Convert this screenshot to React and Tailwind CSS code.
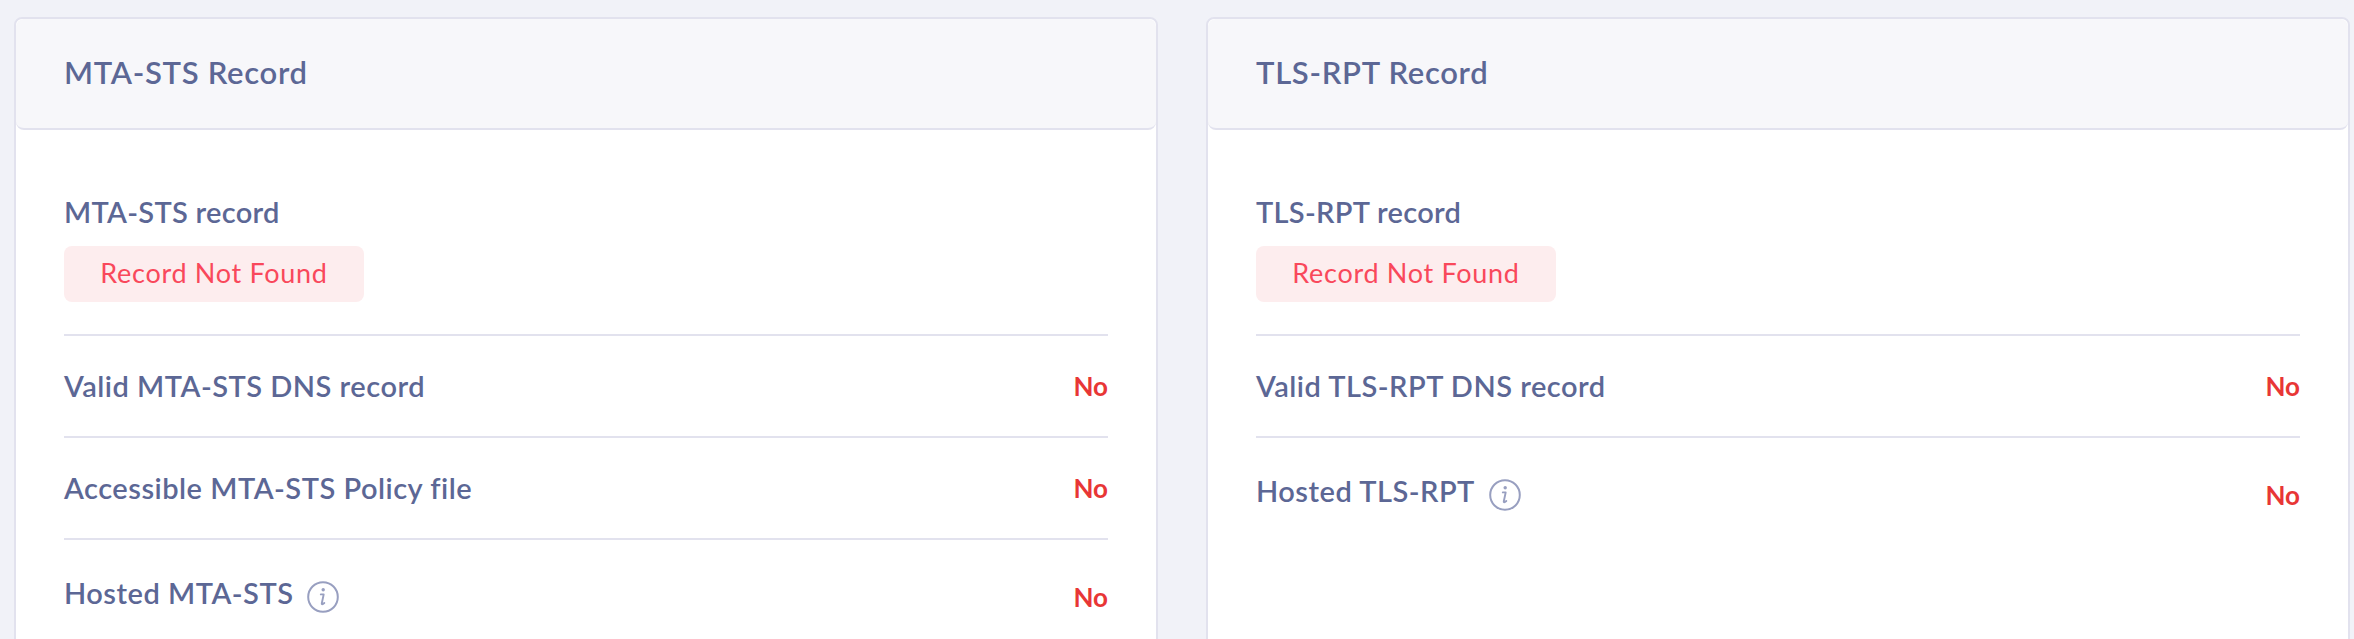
const stack = "font-['Lato','Open_Sans',sans-serif]";

function InfoIcon() {
  return (
    <svg width="32" height="32" viewBox="0 0 32 32" className="ml-4 shrink-0 -translate-x-[2px]" fill="none">
      <circle cx="16" cy="16" r="14.8" stroke="#989fc0" strokeWidth="2" />
      <circle cx="16.2" cy="8.8" r="1.7" fill="#989fc0" />
      <path d="M13.8 13.4h2.9l-1.9 8.9c-.2 1.1.7 1.4 2.5-.3" stroke="#989fc0" strokeWidth="1.9" strokeLinecap="round" strokeLinejoin="round" />
    </svg>
  );
}

function Row({ label, info }) {
  return (
    <div className={`flex items-center justify-between border-t-2 border-[#e2e2ee] ${info ? 'h-[116px]' : 'h-[102px]'}`}>
      <div className="flex items-center text-[29px] font-semibold tracking-[0.5px] text-[#5c6795]">
        <span className={info ? 'mb-2' : ''}>{label}</span>
        {info && <InfoIcon />}
      </div>
      <span className="text-[26px] font-bold text-[#e83636]">No</span>
    </div>
  );
}

function Card({ title, recordLabel, rows }) {
  return (
    <div className="h-[700px] rounded-t-lg border-2 border-[#e2e2ee] bg-white">
      <div className="flex h-[111px] items-center rounded-lg border-b-2 border-[#e2e2ee] bg-[#f7f7fa] px-[48px] pb-[2px] text-[31px] font-semibold tracking-[0.7px] text-[#5c6795]">
        {title}
      </div>
      <div className="px-[48px] pt-[64px]">
        <div className="text-[29px] font-semibold leading-[36px] tracking-[0.3px] text-[#5c6795]">{recordLabel}</div>
        <div className="mt-4 mb-8 flex h-[56px] w-[300px] items-center justify-center rounded-lg bg-[#fdedee] pb-[2px] text-[27px] tracking-[0.7px] text-[#f9485b]">
          Record Not Found
        </div>
        {rows.map((r) => (
          <Row key={r.label} {...r} />
        ))}
      </div>
    </div>
  );
}

export default function App() {
  return (
    <div className={`h-[639px] overflow-hidden bg-[#f1f2f8] pl-[14px] pr-1 pt-[17px] ${stack}`}>
      <div className="grid grid-cols-2 gap-12">
        <Card
          title="MTA-STS Record"
          recordLabel="MTA-STS record"
          rows={[
            { label: 'Valid MTA-STS DNS record' },
            { label: 'Accessible MTA-STS Policy file' },
            { label: 'Hosted MTA-STS', info: true },
          ]}
        />
        <Card
          title="TLS-RPT Record"
          recordLabel="TLS-RPT record"
          rows={[
            { label: 'Valid TLS-RPT DNS record' },
            { label: 'Hosted TLS-RPT', info: true },
          ]}
        />
      </div>
    </div>
  );
}
